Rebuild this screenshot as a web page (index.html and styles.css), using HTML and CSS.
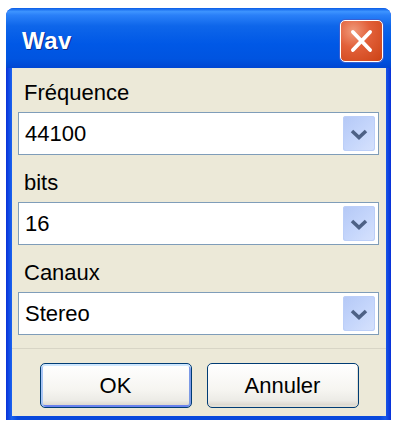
FILE: index.html
```html
<!DOCTYPE html>
<html lang="fr">
<head>
    <meta charset="UTF-8">
    <meta name="viewport" content="width=device-width, initial-scale=1.0">
    <title>Wav</title>
    <link rel="stylesheet" href="styles.css">
</head>
<body>
    <div class="window">
        <div class="titlebar">
            <span class="title">Wav</span>
            <button class="close" title="Fermer">
                <svg width="43" height="42" viewBox="0 0 43 42">
                    <path d="M12.5 11.5 L30.5 30.5 M30.5 11.5 L12.5 30.5" stroke="#fff" stroke-width="4" stroke-linecap="round"/>
                </svg>
            </button>
        </div>
        <div class="dialog">
            <div class="fields">
                <div class="field-label">Fréquence</div>
                <div class="combo">
                    <span class="combo-value">44100</span>
                    <span class="combo-btn"><svg width="32" height="36" viewBox="0 0 32 36"><path d="M9 15 L16 21.5 L23 15" fill="none" stroke="#4d6185" stroke-width="3.6"/></svg></span>
                </div>
                <div class="field-label">bits</div>
                <div class="combo">
                    <span class="combo-value">16</span>
                    <span class="combo-btn"><svg width="32" height="36" viewBox="0 0 32 36"><path d="M9 15 L16 21.5 L23 15" fill="none" stroke="#4d6185" stroke-width="3.6"/></svg></span>
                </div>
                <div class="field-label">Canaux</div>
                <div class="combo">
                    <span class="combo-value">Stereo</span>
                    <span class="combo-btn"><svg width="32" height="36" viewBox="0 0 32 36"><path d="M9 15 L16 21.5 L23 15" fill="none" stroke="#4d6185" stroke-width="3.6"/></svg></span>
                </div>
            </div>
            <div class="actions">
                <button class="btn btn-default">OK</button>
                <button class="btn">Annuler</button>
            </div>
        </div>
    </div>
</body>
</html>
```

FILE: styles.css
```css
body {
    margin: 0;
    background: #fff;
    font-family: "Liberation Sans", Arial, sans-serif;
}
.window {
    margin: 8px 0 0 6px;
    width: 385px;
    height: 412px;
    display: flex;
    flex-direction: column;
    background: linear-gradient(90deg, #0831d9 0%, #1a62ee 1.5%, #0848dc 3%, #0848dc 97%, #1a5ae8 98.5%, #0831d9 100%);
    border-radius: 8px 8px 0 0;
    overflow: hidden;
}
.titlebar {
    height: 60px;
    box-sizing: border-box;
    padding: 6px 8px 0 16px;
    display: flex;
    align-items: center;
    justify-content: space-between;
    background: linear-gradient(180deg, #0a5ce6 0%, #3d94ff 6%, #2a80f8 12%, #0e66ea 30%, #0058e6 60%, #0054e0 85%, #0046d2 100%);
}
.title {
    color: #fff;
    font-weight: bold;
    font-size: 24px;
    letter-spacing: 0.5px;
    text-shadow: 1px 1px 0 #0a2a8a;
}
.close {
    width: 43px;
    height: 42px;
    padding: 0;
    border: 1.5px solid #fff;
    border-radius: 5px;
    background: radial-gradient(circle at 30% 25%, #f09a7a 0%, #e2603a 40%, #cc4214 100%);
    box-shadow: 0 0 0 1px #3a5fd0;
    display: flex;
    align-items: center;
    justify-content: center;
}
.dialog {
    flex: 1;
    margin: 0 5px 4px 6px;
    background: #ece9d8;
    display: flex;
    flex-direction: column;
}
.fields {
    padding: 12px 7px 0 6px;
    display: flex;
    flex-direction: column;
}
.field-label {
    font-size: 22px;
    line-height: 26px;
    padding-left: 6px;
    margin-top: 15px;
    margin-bottom: 6px;
    color: #000;
}
.field-label:first-child {
    margin-top: 0;
}
.combo {
    height: 43px;
    box-sizing: border-box;
    border: 1px solid #7f9db9;
    background: #fff;
    display: flex;
    align-items: center;
    padding-left: 6px;
}
.combo-value {
    font-size: 22px;
    color: #000;
}
.combo-btn {
    margin-left: auto;
    margin-right: 3px;
    width: 32px;
    height: 35px;
    border-radius: 3px;
    background: linear-gradient(135deg, #b4c8f6 0%, #c4d5fb 50%, #d6e2fd 100%);
    box-shadow: inset 0 0 0 1px #bccff8;
}
.combo-btn svg {
    display: block;
}
.actions {
    margin-top: 13px;
    border-top: 1px solid #d8d5c6;
    padding-top: 14px;
    display: flex;
    justify-content: center;
    gap: 15px;
}
.btn {
    width: 152px;
    height: 45px;
    font-family: "Liberation Sans", Arial, sans-serif;
    font-size: 22px;
    color: #000;
    border: 1px solid #003c74;
    border-radius: 5px;
    background: linear-gradient(180deg, #ffffff 0%, #f6f5f1 60%, #ecebe6 85%, #d6d0c5 100%);
    box-shadow: inset -1px -2px 0 #e2dfd6;
}
.btn-default {
    box-shadow: inset 0 2px 0 #cee7ff, inset 2px 0 0 #a8c5f5, inset -2px 0 0 #7c9ae6, inset 0 -2px 0 #6982ee;
}
```
